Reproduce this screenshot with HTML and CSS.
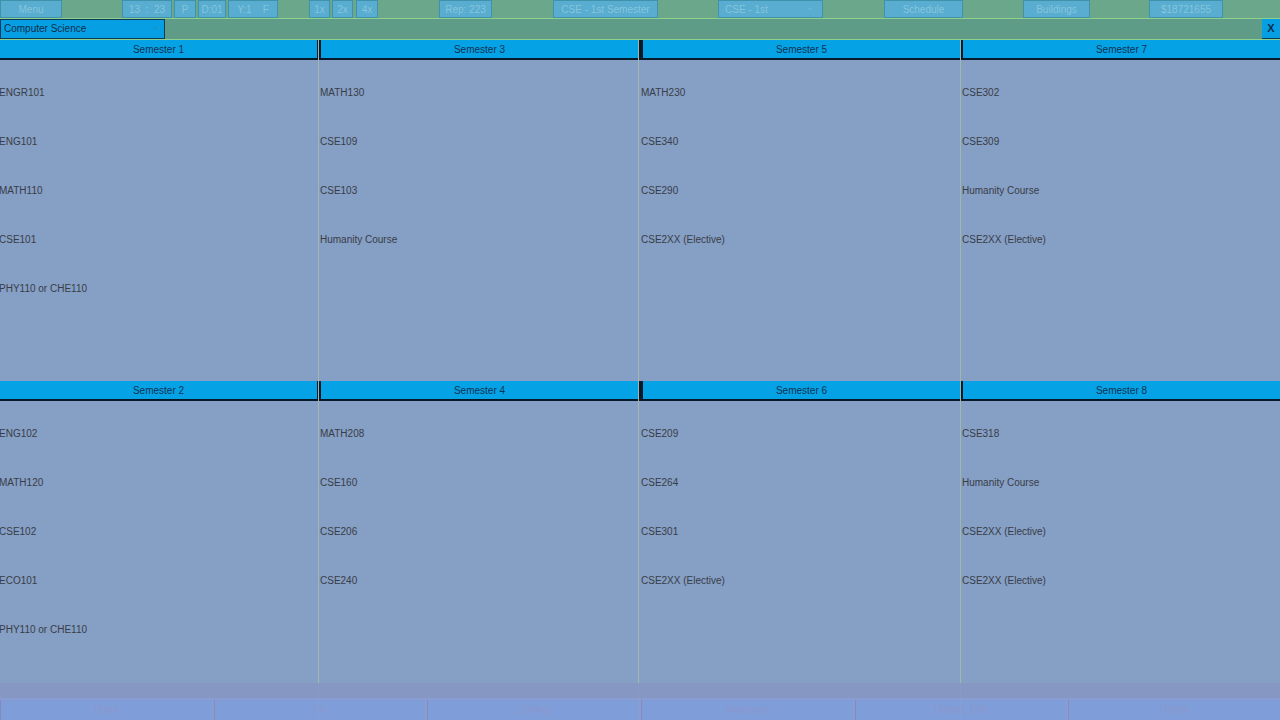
FILE: index.html
```html
<!DOCTYPE html>
<html lang="en">
<head>
    <meta charset="UTF-8">
    <title>Curriculum</title>
    <link rel="stylesheet" href="styles.css">
</head>
<body>

<div class="topbar">
    <div class="btn w-menu">Menu</div>
    <div class="btn w-time">13 &nbsp;: &nbsp;23</div>
    <div class="btn w-p">P</div>
    <div class="btn w-d">D:01</div>
    <div class="btn w-y">Y:1 &nbsp;&nbsp;&nbsp;F</div>
    <div class="btn w-1x">1x</div>
    <div class="btn w-2x">2x</div>
    <div class="btn w-4x">4x</div>
    <div class="btn w-rep">Rep: 223</div>
    <div class="btn w-sem">CSE - 1st Semester</div>
    <div class="btn w-drop">CSE - 1st <span class="caret">&#8964;</span></div>
    <div class="btn w-sched">Schedule</div>
    <div class="btn w-build">Buildings</div>
    <div class="btn w-money">$18721655</div>
</div>

<div class="subbar">
    <div class="major">Computer Science <span class="caret">&#8964;</span></div>
    <div class="close">X</div>
</div>

<div class="grid" id="grid"></div>

<div class="bottombar">
    <div class="bbtn">Road</div>
    <div class="bbtn">Fix</div>
    <div class="bbtn">Zoning</div>
    <div class="bbtn">Measures</div>
    <div class="bbtn">Depart. Edit</div>
    <div class="bbtn">Delete</div>
</div>

<script>
    const semesters = [
        ["ENGR101", "ENG101", "MATH110", "CSE101", "PHY110 or CHE110"],
        ["ENG102", "MATH120", "CSE102", "ECO101", "PHY110 or CHE110"],
        ["MATH130", "CSE109", "CSE103", "Humanity Course"],
        ["MATH208", "CSE160", "CSE206", "CSE240"],
        ["MATH230", "CSE340", "CSE290", "CSE2XX (Elective)"],
        ["CSE209", "CSE264", "CSE301", "CSE2XX (Elective)"],
        ["CSE302", "CSE309", "Humanity Course", "CSE2XX (Elective)"],
        ["CSE318", "Humanity Course", "CSE2XX (Elective)", "CSE2XX (Elective)"]
    ];

    const grid = document.getElementById("grid");

    // two semesters stacked per column, odd on top
    for (let c = 0; c < 4; c++) {
        const col = document.createElement("div");
        col.className = "column";
        for (let r = 0; r < 2; r++) {
            const n = c * 2 + r;
            const panel = document.createElement("div");
            panel.className = "panel";
            let html = `<div class="sem-head">Semester ${n + 1}</div><ul class="courses">`;
            semesters[n].forEach(course => {
                html += `<li>${course}</li>`;
            });
            html += "</ul>";
            panel.innerHTML = html;
            col.appendChild(panel);
        }
        grid.appendChild(col);
    }
</script>

</body>
</html>
```

FILE: styles.css
```css
body {
    font-family: 'Liberation Sans', Arial, sans-serif;
    font-size: 10px;
    margin: 0;
    padding: 0;
    width: 1280px;
    height: 720px;
    overflow: hidden;
    position: relative;
    background-color: #869fc4;
}
.topbar {
    height: 18px;
    background-color: #6aa78b;
    border-bottom: 1px solid #8fd18c;
    display: flex;
    align-items: stretch;
}
.btn {
    box-sizing: border-box;
    height: 18px;
    line-height: 17px;
    background-color: #58add0;
    border: 1px solid #3f92a9;
    color: #86c5dc;
    text-align: center;
    white-space: nowrap;
}
.caret {
    font-size: 9px;
    color: #7ab8cf;
    float: right;
    margin-right: 8px;
    line-height: 12px;
}
.w-menu { width: 62px; }
.w-time { width: 50px; margin-left: 60px; }
.w-p { width: 22px; margin-left: 2px; }
.w-d { width: 28px; margin-left: 2px; }
.w-y { width: 50px; margin-left: 2px; }
.w-1x { width: 21px; margin-left: 31px; }
.w-2x { width: 21px; margin-left: 2px; }
.w-4x { width: 22px; margin-left: 3px; }
.w-rep { width: 53px; margin-left: 61px; }
.w-sem { width: 105px; margin-left: 61px; }
.w-drop { width: 105px; margin-left: 60px; text-align: left; padding-left: 6px; }
.w-sched { width: 79px; margin-left: 61px; }
.w-build { width: 67px; margin-left: 60px; }
.w-money { width: 74px; margin-left: 59px; }
.subbar {
    height: 20px;
    background-color: #5f9c88;
    border-bottom: 1px solid #8fd18c;
    display: flex;
    justify-content: space-between;
}
.major {
    box-sizing: border-box;
    width: 165px;
    height: 20px;
    line-height: 18px;
    padding-left: 3px;
    background-color: #079fe3;
    border: 1px solid #0c3a5a;
    color: #0e2e4c;
}
.major .caret {
    color: #3a86b8;
    margin-right: 4px;
}
.close {
    width: 18px;
    height: 19px;
    line-height: 19px;
    text-align: center;
    background-color: #079fe3;
    border-bottom: 1px solid #0c3a5a;
    color: #0e2e4c;
    font-weight: bold;
    font-size: 11px;
}
.grid {
    display: grid;
    grid-template-columns: 319px 320px 322px 319px;
    height: 680px;
}
.column {
    display: flex;
    flex-direction: column;
    border-right: 1px solid #a3b6ab;
}
.column:last-child {
    border-right: none;
}
.panel {
    height: 341px;
}
.sem-head {
    box-sizing: border-box;
    height: 20px;
    line-height: 19px;
    text-align: center;
    background-color: #06a2e6;
    border-bottom: 2px solid #081a2a;
    border-left: 2px solid #081a2a;
    color: #0f3252;
}
.column:first-child .sem-head {
    border-left: none;
    border-right: 1px solid #081a2a;
}
.column:nth-child(3) .sem-head {
    border-left-width: 4px;
}
.courses {
    list-style: none;
    margin: 0;
    padding: 8px 0 0 1px;
}
.column:nth-child(3) .courses {
    padding-left: 2px;
}
.courses li {
    height: 49px;
    line-height: 49px;
    color: #383d47;
    white-space: nowrap;
}
.column:first-child .courses li {
    margin-left: -2px;
}
.bottombar {
    position: absolute;
    left: 0;
    bottom: 0;
    width: 1280px;
    height: 37px;
    box-sizing: border-box;
    padding-top: 17px;
    background: linear-gradient(#8897c4 0, #8897c4 15px, #8b9dd4 15px);
    opacity: 0.88;
    display: flex;
    gap: 2px;
}
.bbtn {
    flex: 1;
    height: 20px;
    line-height: 20px;
    text-align: center;
    background-color: #7f9edc;
    border-left: 1px solid #8587bd;
    color: #8d97cf;
}
```
